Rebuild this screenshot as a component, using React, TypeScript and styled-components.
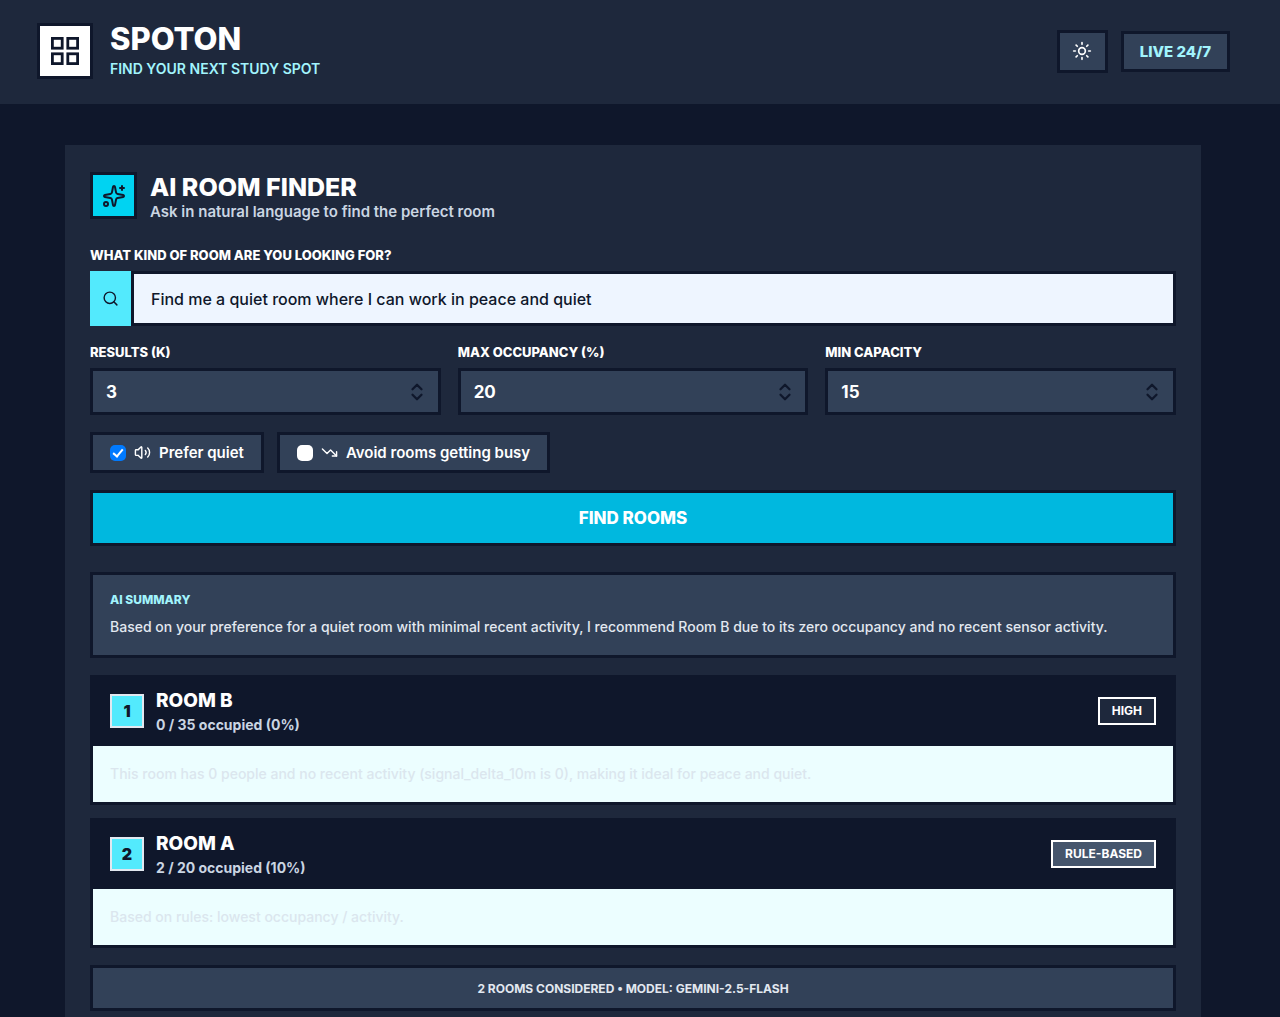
import React, { useState } from "react";
import styled, { createGlobalStyle } from "styled-components";
import {
  ChevronDown,
  ChevronUp,
  Search,
  Sparkles,
  Sun,
  TrendingDown,
  Volume2,
} from "lucide-react";

const color = {
  ink: "#0f172b",
  surface: "#1e283c",
  raised: "#324158",
  badge: "#45556c",
  cyan: "#00d3f2",
  cyanDeep: "#00b8df",
  cyanLight: "#53eafd",
  cyanPale: "#a2f4fd",
  cyanWash: "#ecfeff",
  text: "#ffffff",
  soft: "#cad5e2",
  pale: "#e2e8f0",
};

const GlobalStyle = createGlobalStyle`
  * { box-sizing: border-box; }
  body {
    margin: 0;
    background: ${color.ink};
    color: ${color.text};
    font-family: Inter, "Liberation Sans", sans-serif;
    font-size: 14px;
    line-height: 20px;
  }
  h1, h2, h3, p { margin: 0; }
  button, input { font: inherit; color: inherit; margin: 0; }
  svg { flex-shrink: 0; }
`;

const Page = styled.div`
  height: 100vh;
  overflow-y: auto;
  scrollbar-width: none;
`;

const Header = styled.header`
  display: flex;
  align-items: center;
  justify-content: space-between;
  padding: 23px 50px 25px 37px;
  background: ${color.surface};
`;

const Brand = styled.div`
  display: flex;
  align-items: center;
  gap: 17px;
`;

const IconBox = styled.div<{ $size: number; $fill: string }>`
  display: flex;
  align-items: center;
  justify-content: center;
  width: ${(p) => p.$size}px;
  height: ${(p) => p.$size}px;
  border: 3px solid ${color.ink};
  background: ${(p) => p.$fill};
  color: ${color.ink};
`;

const BrandName = styled.h1`
  font-size: 31px;
  line-height: 32px;
  font-weight: 800;
`;

const Tagline = styled.p`
  padding-top: 4px;
  color: ${color.cyanPale};
  font-weight: 600;
`;

const Actions = styled.div`
  display: flex;
  align-items: center;
  gap: 13px;
`;

const ThemeButton = styled.button`
  display: flex;
  align-items: center;
  justify-content: center;
  width: 51px;
  height: 43px;
  padding: 0;
  border: 3px solid ${color.ink};
  background: ${color.raised};
`;

const LiveTag = styled.div`
  padding: 8px 16px 7px;
  border: 3px solid ${color.ink};
  background: ${color.raised};
  color: ${color.cyanPale};
  font-size: 15px;
  font-weight: 800;
`;

const Main = styled.main`
  padding: 41px 79px 40px 65px;
`;

const Panel = styled.section`
  padding: 27px 25px 24px;
  background: ${color.surface};
`;

const PanelHead = styled.div`
  display: flex;
  align-items: flex-start;
  gap: 13px;
  padding-bottom: 24px;
`;

const PanelTitle = styled.h2`
  font-size: 25px;
  line-height: 30px;
  font-weight: 800;
`;

const PanelNote = styled.p`
  color: ${color.soft};
  font-size: 15px;
  font-weight: 600;
`;

const Form = styled.form`
  display: flex;
  flex-direction: column;
  gap: 17px;
`;

const Field = styled.div`
  display: flex;
  flex-direction: column;
  gap: 7px;
`;

const Label = styled.label`
  font-size: 13px;
  line-height: 18px;
  font-weight: 800;
`;

const SearchRow = styled.div`
  display: flex;
  height: 55px;
`;

const SearchMark = styled.span`
  display: flex;
  align-items: center;
  justify-content: center;
  width: 41px;
  background: ${color.cyanLight};
  color: ${color.ink};
`;

const SearchInput = styled.input`
  flex: 1;
  min-width: 0;
  padding: 0 17px;
  border: 3px solid ${color.ink};
  border-radius: 0;
  outline: none;
  background: #eef5ff;
  color: ${color.ink};
  font-size: 16px;
  font-weight: 500;
`;

const Limits = styled.div`
  display: grid;
  grid-template-columns: repeat(3, 1fr);
  gap: 17px;
`;

const NumberBox = styled.div`
  display: flex;
  align-items: center;
  height: 47px;
  padding: 0 13px;
  border: 3px solid ${color.ink};
  background: ${color.raised};
`;

const NumberInput = styled.input`
  flex: 1;
  min-width: 0;
  padding: 0;
  border: 0;
  outline: none;
  background: transparent;
  font-size: 17px;
  font-weight: 700;
  appearance: textfield;
  &::-webkit-inner-spin-button { appearance: none; margin: 0; }
`;

const Stepper = styled.div`
  display: flex;
  flex-direction: column;
  color: ${color.ink};
`;

const StepButton = styled.button`
  display: flex;
  align-items: center;
  justify-content: center;
  width: 15px;
  height: 10px;
  padding: 0;
  border: 0;
  background: transparent;
`;

const Toggles = styled.div`
  display: flex;
  flex-wrap: wrap;
  gap: 13px;
`;

const Toggle = styled.label`
  display: flex;
  align-items: center;
  gap: 8px;
  height: 41px;
  padding: 0 17px;
  border: 3px solid ${color.ink};
  background: ${color.raised};
  font-size: 15px;
  font-weight: 600;
`;

const Check = styled.input`
  appearance: none;
  display: flex;
  align-items: center;
  justify-content: center;
  width: 16px;
  height: 16px;
  border-radius: 5px;
  background: ${color.text};
  &:checked { background: #007aff; }
  &:checked::after {
    content: "";
    width: 4px;
    height: 8px;
    margin-bottom: 2px;
    border: solid ${color.text};
    border-width: 0 2px 2px 0;
    transform: rotate(40deg);
  }
`;

const Submit = styled.button`
  height: 56px;
  border: 3px solid ${color.ink};
  background: ${color.cyanDeep};
  font-size: 17px;
  font-weight: 800;
`;

const Results = styled.div`
  display: flex;
  flex-direction: column;
  gap: 17px;
  padding-top: 26px;
`;

const Summary = styled.section`
  padding: 16px 17px 17px;
  border: 3px solid ${color.ink};
  background: ${color.raised};
`;

const SummaryTitle = styled.h3`
  color: ${color.cyanPale};
  font-size: 12px;
  line-height: 18px;
  font-weight: 800;
`;

const SummaryText = styled.p`
  padding-top: 6px;
  color: ${color.pale};
  line-height: 23px;
  font-weight: 500;
`;

const RoomList = styled.div`
  display: flex;
  flex-direction: column;
  gap: 13px;
`;

const RoomCard = styled.article`
  border: 3px solid ${color.ink};
  background: ${color.cyanWash};
`;

const RoomHead = styled.div`
  display: flex;
  align-items: center;
  gap: 12px;
  height: 68px;
  padding: 0 17px 3px;
  background: ${color.ink};
`;

const Rank = styled.span`
  display: flex;
  align-items: center;
  justify-content: center;
  width: 34px;
  height: 34px;
  border: 2px solid ${color.pale};
  background: ${color.cyanLight};
  color: ${color.ink};
  font-size: 16px;
  font-weight: 900;
`;

const RoomInfo = styled.div`
  flex: 1;
`;

const RoomName = styled.h3`
  font-size: 19px;
  line-height: 28px;
  font-weight: 800;
`;

const Occupancy = styled.p`
  color: ${color.soft};
  font-weight: 700;
`;

const Badge = styled.span<{ $muted?: boolean }>`
  padding: 3px 12px;
  border: 2px solid ${color.text};
  background: ${(p) => (p.$muted ? color.badge : color.surface)};
  font-size: 12px;
  line-height: 18px;
  font-weight: 700;
`;

const Reason = styled.p`
  padding: 18px 17px;
  color: #dbe6ee;
  font-weight: 500;
`;

const Footnote = styled.p`
  padding: 12px 17px 10px;
  border: 3px solid ${color.ink};
  background: ${color.raised};
  color: ${color.pale};
  font-size: 12px;
  line-height: 18px;
  font-weight: 700;
  text-align: center;
`;

const rooms = [
  {
    name: "ROOM B",
    occupancy: "0 / 35 occupied (0%)",
    badge: "HIGH",
    muted: false,
    reason:
      "This room has 0 people and no recent activity (signal_delta_10m is 0), making it ideal for peace and quiet.",
  },
  {
    name: "ROOM A",
    occupancy: "2 / 20 occupied (10%)",
    badge: "RULE-BASED",
    muted: true,
    reason: "Based on rules: lowest occupancy / activity.",
  },
];

function GridLogo() {
  return (
    <svg width="28" height="28" viewBox="0 0 28 28" fill="none" stroke="currentColor" strokeWidth="2.8" aria-hidden="true">
      <rect x="1.4" y="1.4" width="9.8" height="9.8" />
      <rect x="16.8" y="1.4" width="9.8" height="9.8" />
      <rect x="1.4" y="16.8" width="9.8" height="9.8" />
      <rect x="16.8" y="16.8" width="9.8" height="9.8" />
    </svg>
  );
}

function NumberField(props: { id: string; label: string; initial: number }) {
  const [value, setValue] = useState(props.initial);
  return (
    <Field>
      <Label htmlFor={props.id}>{props.label}</Label>
      <NumberBox>
        <NumberInput
          id={props.id}
          type="number"
          value={value}
          onChange={(e) => setValue(Number(e.target.value))}
        />
        <Stepper>
          <StepButton type="button" aria-label="Increase" onClick={() => setValue(value + 1)}>
            <ChevronUp size={18} strokeWidth={3} />
          </StepButton>
          <StepButton type="button" aria-label="Decrease" onClick={() => setValue(value - 1)}>
            <ChevronDown size={18} strokeWidth={3} />
          </StepButton>
        </Stepper>
      </NumberBox>
    </Field>
  );
}

export default function App() {
  return (
    <Page>
      <GlobalStyle />
      <Header>
        <Brand>
          <IconBox $size={56} $fill={color.text}>
            <GridLogo />
          </IconBox>
          <div>
            <BrandName>SPOTON</BrandName>
            <Tagline>FIND YOUR NEXT STUDY SPOT</Tagline>
          </div>
        </Brand>
        <Actions>
          <ThemeButton type="button" aria-label="Toggle theme">
            <Sun size={20} strokeWidth={2} />
          </ThemeButton>
          <LiveTag>LIVE 24/7</LiveTag>
        </Actions>
      </Header>
      <Main>
        <Panel>
          <PanelHead>
            <IconBox $size={47} $fill={color.cyan}>
              <Sparkles size={24} strokeWidth={2} />
            </IconBox>
            <div>
              <PanelTitle>AI ROOM FINDER</PanelTitle>
              <PanelNote>Ask in natural language to find the perfect room</PanelNote>
            </div>
          </PanelHead>
          <Form onSubmit={(e) => e.preventDefault()}>
            <Field>
              <Label htmlFor="query">WHAT KIND OF ROOM ARE YOU LOOKING FOR?</Label>
              <SearchRow>
                <SearchMark>
                  <Search size={17} strokeWidth={2} />
                </SearchMark>
                <SearchInput
                  id="query"
                  type="text"
                  defaultValue="Find me a quiet room where I can work in peace and quiet"
                />
              </SearchRow>
            </Field>
            <Limits>
              <NumberField id="results" label="RESULTS (K)" initial={3} />
              <NumberField id="occupancy" label="MAX OCCUPANCY (%)" initial={20} />
              <NumberField id="capacity" label="MIN CAPACITY" initial={15} />
            </Limits>
            <Toggles>
              <Toggle>
                <Check type="checkbox" defaultChecked />
                <Volume2 size={17} strokeWidth={2} />
                Prefer quiet
              </Toggle>
              <Toggle>
                <Check type="checkbox" />
                <TrendingDown size={17} strokeWidth={2} />
                Avoid rooms getting busy
              </Toggle>
            </Toggles>
            <Submit type="submit">FIND ROOMS</Submit>
          </Form>
          <Results>
            <Summary>
              <SummaryTitle>AI SUMMARY</SummaryTitle>
              <SummaryText>
                Based on your preference for a quiet room with minimal recent activity, I recommend Room B due to its zero occupancy and no recent sensor activity.
              </SummaryText>
            </Summary>
            <RoomList>
              {rooms.map((room, index) => (
                <RoomCard key={room.name}>
                  <RoomHead>
                    <Rank>{index + 1}</Rank>
                    <RoomInfo>
                      <RoomName>{room.name}</RoomName>
                      <Occupancy>{room.occupancy}</Occupancy>
                    </RoomInfo>
                    <Badge $muted={room.muted}>{room.badge}</Badge>
                  </RoomHead>
                  <Reason>{room.reason}</Reason>
                </RoomCard>
              ))}
            </RoomList>
            <Footnote>2 ROOMS CONSIDERED • MODEL: GEMINI-2.5-FLASH</Footnote>
          </Results>
        </Panel>
      </Main>
    </Page>
  );
}
